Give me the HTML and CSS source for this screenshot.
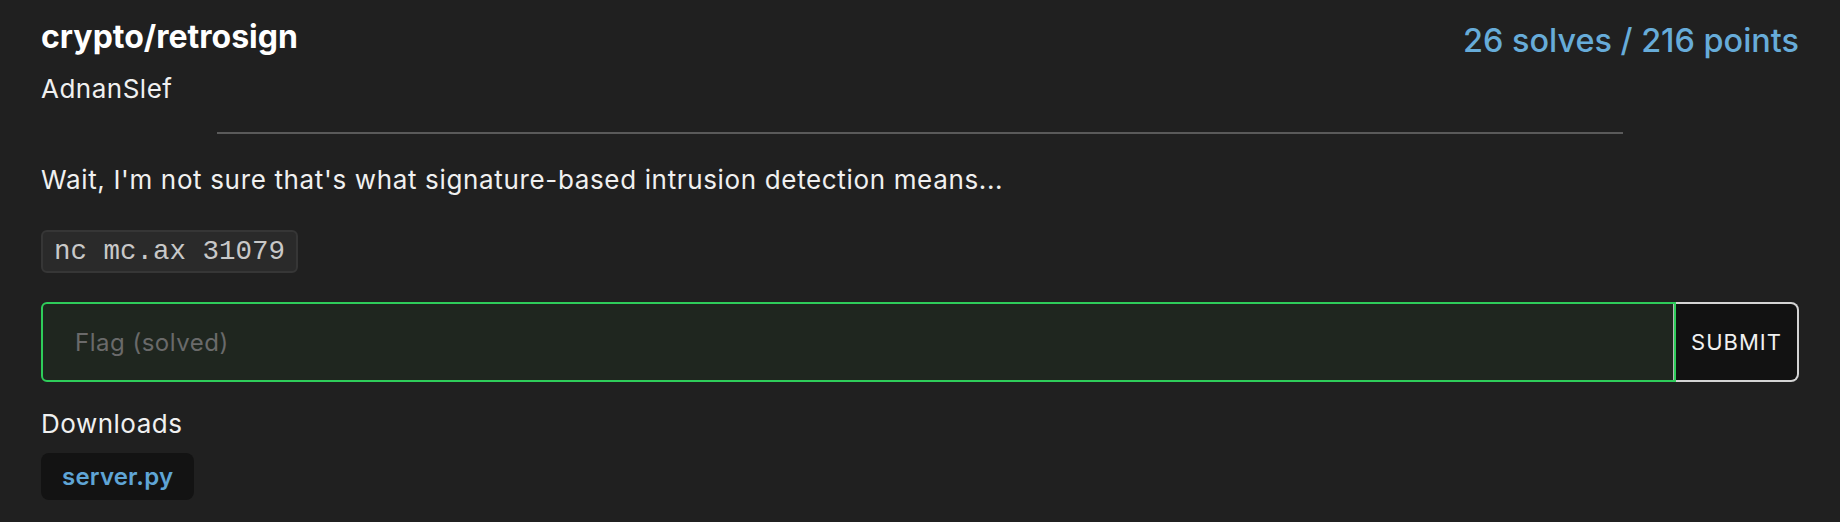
FILE: index.html
```html
<!DOCTYPE html>
<html lang="en">
<head>
<meta charset="utf-8">
<title>crypto/retrosign</title>
<link rel="stylesheet" href="styles.css">
</head>
<body>
<div class="challenge">
  <div class="head">
    <div class="head-left">
      <h1 class="title">crypto/retrosign</h1>
      <div class="author">AdnanSlef</div>
    </div>
    <div class="stats">26 solves / 216 points</div>
  </div>
  <hr class="divider">
  <p class="desc">Wait, I'm not sure that's what signature-based intrusion detection means...</p>
  <div class="code-row"><code class="code">nc mc.ax 31079</code></div>
  <form class="flag-form">
    <input class="flag-input" type="text" placeholder="Flag (solved)">
    <button class="submit" type="button">SUBMIT</button>
  </form>
  <div class="downloads-label">Downloads</div>
  <div class="downloads">
    <a class="file" href="#">server.py</a>
  </div>
</div>
</body>
</html>
```

FILE: styles.css
```css
html, body {
  margin: 0;
  padding: 0;
  background: #202020;
}
body {
  font-family: Inter, "Noto Sans", sans-serif;
  color: #f0f0f0;
}
.challenge {
  padding: 17px 41px 0 41px;
  display: flex;
  flex-direction: column;
}
.head {
  display: flex;
  justify-content: space-between;
  align-items: flex-start;
}
.head-left {
  display: flex;
  flex-direction: column;
}
.title {
  margin: 0;
  font-size: 32px;
  line-height: 40px;
  font-weight: 700;
  color: #ffffff;
}
.author {
  margin-top: 16px;
  font-size: 26px;
  line-height: 32px;
  letter-spacing: 0.5px;
  color: #f0f0f0;
}
.stats {
  margin-top: 4px;
  font-size: 32.4px;
  line-height: 40px;
  font-weight: 500;
  color: #67acd9;
}
.divider {
  width: 80%;
  margin: 27px auto 0 auto;
  border: 0;
  height: 2px;
  background: #5a5a5a;
}
.desc {
  margin: 30px 0 0 0;
  font-size: 26px;
  line-height: 32px;
  letter-spacing: 0.65px;
  color: #f0f0f0;
}
.code-row {
  display: flex;
  margin-top: 34px;
}
.code {
  font-family: "Liberation Mono", monospace;
  font-size: 27.5px;
  line-height: 39px;
  padding: 0 11px;
  background: #2a2a2a;
  border: 2px solid #363636;
  border-radius: 6px;
  color: #c8c8c8;
}
.flag-form {
  display: flex;
  margin: 29px 0 0 0;
  height: 80px;
}
.flag-input {
  flex: 1;
  min-width: 0;
  box-sizing: border-box;
  height: 80px;
  margin: 0;
  padding: 0 32px;
  background: #1f261f;
  border: 2px solid #2ecc5a;
  border-radius: 6px 0 0 6px;
  box-shadow: inset -1px 0 0 #b8b8b8;
  font-family: Inter, "Noto Sans", sans-serif;
  font-size: 24px;
  letter-spacing: 0.5px;
  color: #eee;
  outline: none;
}
.flag-input::placeholder {
  color: #6a6a6a;
}
.submit {
  box-sizing: border-box;
  width: 123px;
  height: 80px;
  margin: 0;
  padding: 0;
  background: #121212;
  border: 2px solid #d4d4d4;
  border-left: none;
  border-radius: 0 8px 8px 0;
  font-family: Inter, "Noto Sans", sans-serif;
  font-size: 22px;
  letter-spacing: 1px;
  color: #f0f0f0;
}
.downloads-label {
  margin-top: 26px;
  font-size: 26px;
  line-height: 32px;
  letter-spacing: 0.5px;
  color: #f0f0f0;
}
.downloads {
  display: flex;
  margin-top: 13px;
}
.file {
  display: block;
  padding: 0 21px;
  height: 47px;
  line-height: 47px;
  background: #131313;
  border-radius: 8px;
  font-size: 24px;
  font-weight: 600;
  letter-spacing: 0.2px;
  color: #5fa5d6;
  text-decoration: none;
}
```
